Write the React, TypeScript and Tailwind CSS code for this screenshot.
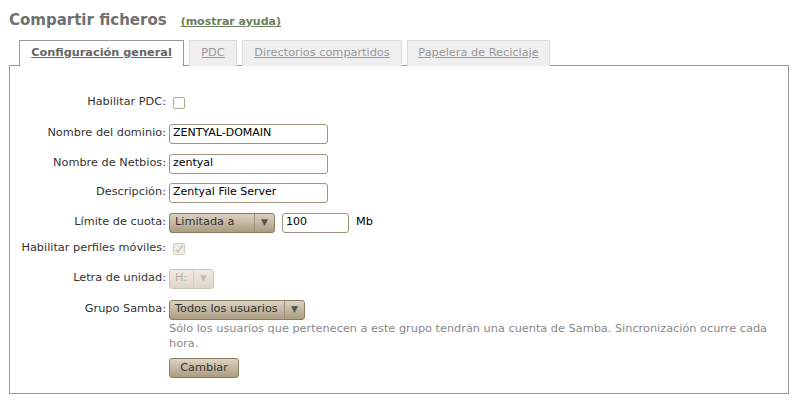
import React from "react";

const font = "font-['DejaVu_Sans',_'Liberation_Sans',_sans-serif]";

type SelectProps = {
  label: string;
  width: string;
  disabled?: boolean;
};

const FakeSelect = ({ label, width, disabled }: SelectProps) => (
  <div
    className={`${width} h-[20px] flex items-stretch rounded-[3px] border text-[11.3px] ${
      disabled
        ? "border-[#cfc6b6] bg-gradient-to-b from-[#f0ece5] to-[#ddd5c8] text-[#b8b0a2]"
        : "border-[#8c7c62] bg-gradient-to-b from-[#ddd3c2] to-[#ab9c82] text-[#333]"
    }`}
  >
    <span className="flex-1 flex items-center pl-[5px] whitespace-nowrap overflow-hidden">
      {label}
    </span>
    <span
      className={`w-[20px] flex items-center justify-center border-l text-[9px] ${
        disabled ? "border-[#d6cfc3] text-[#c8c0b2]" : "border-[#a2937a] text-[#555]"
      }`}
    >
      ▼
    </span>
  </div>
);

const TextInput = ({ value, width }: { value: string; width: string }) => (
  <div
    className={`${width} h-[20px] flex items-center pl-[3px] bg-white border border-[#a3937a] rounded-[3px] text-[11px] text-black`}
  >
    {value}
  </div>
);

const Row = ({
  label,
  className,
  children,
}: {
  label: string;
  className: string;
  children: React.ReactNode;
}) => (
  <div className={`flex items-center ${className}`}>
    <div className="w-[156px] text-right text-[11.3px] text-[#333] whitespace-nowrap">
      {label}
    </div>
    <div className="ml-[3px] flex items-center">{children}</div>
  </div>
);

const tabs = [
  { name: "Configuración general", active: true, width: "w-[165px]" },
  { name: "PDC", active: false, width: "w-[48px]" },
  { name: "Directorios compartidos", active: false, width: "w-[160px]" },
  { name: "Papelera de Reciclaje", active: false, width: "w-[143px]" },
];

export default function App() {
  return (
    <div className={`${font} w-[798px] h-[404px] bg-white overflow-hidden`}>
      <div className="pl-[9px] pt-[9px] flex items-baseline">
        <h1 className="text-[15px] font-bold text-[#707070]">Compartir ficheros</h1>
        <a className="ml-[14px] text-[11px] font-bold text-[#6e7e5c] underline">
          (mostrar ayuda)
        </a>
      </div>

      <div className="mt-[8px] ml-[19px] flex gap-[5px]">
        {tabs.map((tab) => (
          <div
            key={tab.name}
            className={`${tab.width} h-[26px] flex items-center justify-center text-[11.3px] underline border border-b-0 ${
              tab.active
                ? "bg-white border-[#999] text-[#666] font-bold relative z-10"
                : "bg-[#efefef] border-[#dcdcdc] text-[#999]"
            }`}
          >
            {tab.name}
          </div>
        ))}
      </div>

      <div className="mx-[9px] -mt-px h-[329px] border border-[#999] pt-[27px]">
        <Row label="Habilitar PDC:" className="h-[20px]">
          <div className="ml-[4px] w-[12px] h-[12px] border border-[#b3a58e] rounded-[2px] bg-white" />
        </Row>
        <Row label="Nombre del dominio:" className="h-[20px] mt-[11px]">
          <TextInput value="ZENTYAL-DOMAIN" width="w-[159px]" />
        </Row>
        <Row label="Nombre de Netbios:" className="h-[20px] mt-[10px]">
          <TextInput value="zentyal" width="w-[159px]" />
        </Row>
        <Row label="Descripción:" className="h-[20px] mt-[9px]">
          <TextInput value="Zentyal File Server" width="w-[159px]" />
        </Row>
        <Row label="Límite de cuota:" className="h-[20px] mt-[10px]">
          <FakeSelect label="Limitada a" width="w-[106px]" />
          <div className="ml-[7px]">
            <TextInput value="100" width="w-[67px]" />
          </div>
          <span className="ml-[7px] text-[11.3px] text-black">Mb</span>
        </Row>
        <Row label="Habilitar perfiles móviles:" className="h-[16px] mt-[8px]">
          <div className="ml-[4px] w-[12px] h-[12px] border border-[#d5ccbd] rounded-[2px] bg-[#efebe4] flex items-center justify-center">
            <svg width="10" height="10" viewBox="0 0 10 10">
              <path d="M2 5.5 L4 8 L8.5 1.5" fill="none" stroke="#cbc3b6" strokeWidth="1.4" />
            </svg>
          </div>
        </Row>
        <Row label="Letra de unidad:" className="h-[20px] mt-[12px]">
          <FakeSelect label="H:" width="w-[45px]" disabled />
        </Row>
        <Row label="Grupo Samba:" className="h-[20px] mt-[11px]">
          <FakeSelect label="Todos los usuarios" width="w-[136px]" />
        </Row>
        <div className="ml-[159px] mr-[6px] mt-[1px] text-[11.3px] leading-[15px] text-[#888]">
          Sólo los usuarios que pertenecen a este grupo tendrán una cuenta de Samba. Sincronización
          ocurre cada hora.
        </div>
        <div className="ml-[159px] mt-[3px]">
          <button className="w-[70px] h-[20px] rounded-[3px] border border-[#8c7c62] bg-gradient-to-b from-[#ddd3c2] to-[#ab9c82] text-[11.3px] text-[#333]">
            Cambiar
          </button>
        </div>
      </div>
    </div>
  );
}
